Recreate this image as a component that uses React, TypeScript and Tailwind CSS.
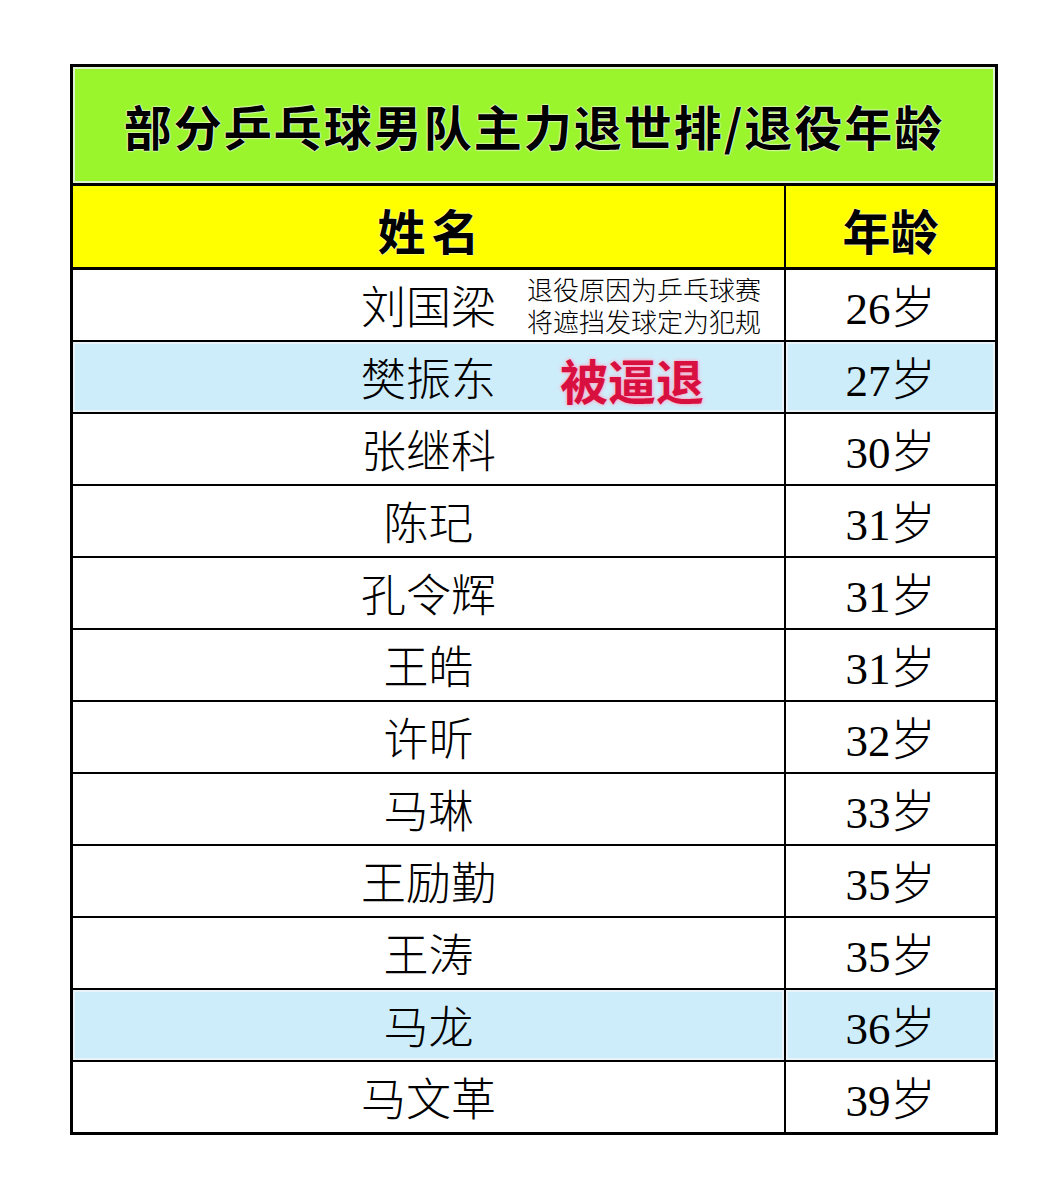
import React from 'react';

type Row = { name: string; age: string; blue?: boolean };

const rows: Row[] = [
    { name: '刘国梁', age: '26' },
    { name: '樊振东', age: '27', blue: true },
    { name: '张继科', age: '30' },
    { name: '陈玘', age: '31' },
    { name: '孔令辉', age: '31' },
    { name: '王皓', age: '31' },
    { name: '许昕', age: '32' },
    { name: '马琳', age: '33' },
    { name: '王励勤', age: '35' },
    { name: '王涛', age: '35' },
    { name: '马龙', age: '36', blue: true },
    { name: '马文革', age: '39' },
];

const serif = "font-[family-name:'Liberation_Serif','Noto_Sans_CJK_SC',serif]";
const sans = "font-[family-name:'Noto_Sans_CJK_SC',sans-serif]";

export default function App() {
    return (
        <div className="min-h-[1191px] w-[1064px] bg-white pt-[64px] pl-[70px]">
            <div className="w-[928px] border-[3px] border-black">
                {/* title */}
                <div className="flex h-[119px] items-center justify-center border-b-[3px] border-black bg-[#9af52c] shadow-[inset_0_0_0_2px_#dff3cf]">
                    <span className={`${sans} text-[48px] font-bold leading-none tracking-[2px] text-black [text-shadow:0_0_2px_#fff,0_0_2px_#fff,0_0_1px_#fff]`}>
                        部分乒乓球男队主力退世排/退役年龄
                    </span>
                </div>

                {/* header */}
                <div className="flex h-[84px] border-b-[3px] border-black bg-[#ffff00]">
                    <div className="flex w-[713px] items-center justify-center border-r-2 border-black pt-[4px]">
                        <span className={`${sans} pl-[6px] text-[48px] font-bold leading-none tracking-[6px] text-black [text-shadow:0_0_2px_#fff,0_0_1px_#fff]`}>
                            姓名
                        </span>
                    </div>
                    <div className="flex flex-1 items-center justify-center pt-[4px]">
                        <span className={`${sans} text-[48px] font-bold leading-none text-black [text-shadow:0_0_2px_#fff,0_0_1px_#fff]`}>
                            年龄
                        </span>
                    </div>
                </div>

                {rows.map((r, i) => {
                    const last = i === rows.length - 1;
                    return (
                        <div
                            key={r.name}
                            className={`flex ${last ? 'h-[70px]' : 'h-[72px] border-b-2 border-black'} ${r.blue ? 'bg-[#ceedfa]' : 'bg-white'}`}
                        >
                            <div
                                className={`relative flex w-[713px] items-center justify-center border-r-2 border-black pt-[9px] ${r.blue ? 'shadow-[inset_0_0_0_2px_#e9f3f8]' : ''}`}
                            >
                                <span className={`${serif} text-[45px] font-light leading-none text-black`}>{r.name}</span>
                                {i === 0 && (
                                    <div className={`absolute left-[454px] top-[6px] ${serif} text-[26px] font-light leading-[32px] text-black`}>
                                        <div>退役原因为乒乓球赛</div>
                                        <div>将遮挡发球定为犯规</div>
                                    </div>
                                )}
                                {i === 1 && (
                                    <span className={`absolute left-[487px] top-[13px] ${sans} text-[48px] font-bold leading-none text-[#d8103f] [text-shadow:0_0_4px_#ff9fc0,0_0_2px_#ffc0d4]`}>
                                        被逼退
                                    </span>
                                )}
                            </div>
                            <div
                                className={`flex flex-1 items-center justify-center pt-[9px] ${r.blue ? 'shadow-[inset_0_0_0_2px_#e9f3f8]' : ''}`}
                            >
                                <span className={`${serif} text-[45px] leading-none text-black`}>
                                    {r.age}
                                    <span className="font-light">岁</span>
                                </span>
                            </div>
                        </div>
                    );
                })}
            </div>
        </div>
    );
}
